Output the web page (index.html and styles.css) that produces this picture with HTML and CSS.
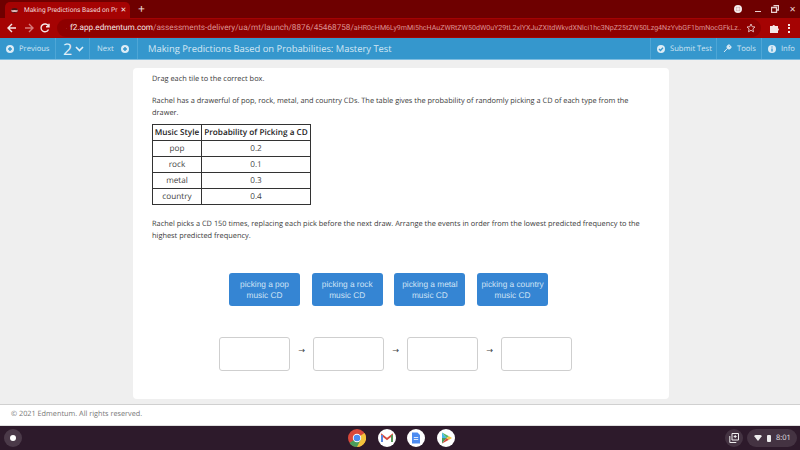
FILE: index.html
```html
<!DOCTYPE html>
<html lang="en">
  <head>
    <meta charset="UTF-8" />
    <title>Making Predictions Based on Probabilities: Mastery Test</title>
    <link rel="stylesheet" href="styles.css">
  </head>
  <body>
    <div class="tabstrip">
      <div class="tab">
        <span class="favicon"></span>
        <span class="tab-title">Making Predictions Based on Pr</span>
        <span class="tab-close">✕</span>
      </div>
      <span class="new-tab">+</span>
      <div class="window-btns">
        <span class="record"></span>
        <span class="win-min"></span>
        <svg class="win-icon" width="8" height="8" viewBox="0 0 8 8"><path d="M2.500 .5h5v4.500h-1.500M.5 2.500h5v5h-5z" fill="none" stroke="#e8d0d0" stroke-width="1.300"/></svg>
        <span class="win-close">✕</span>
      </div>
    </div>

    <div class="toolbar">
      <svg class="nav-arrow" width="10" height="10" viewBox="0 0 10 10"><path d="M9 5H1.500M5 1 1 5l4 4" fill="none" stroke="#f5e6e6" stroke-width="1.400"/></svg>
      <svg class="nav-arrow" width="10" height="10" viewBox="0 0 10 10"><path d="M1 5h7.500M5 1l4 4-4 4" fill="none" stroke="#d77a7a" stroke-width="1.400"/></svg>
      <svg class="nav-arrow" width="10" height="10" viewBox="0 0 10 10"><path d="M8.500 6.500A3.900 3.900 0 1 1 8.400 3M9 .8v3H6" fill="none" stroke="#f5e6e6" stroke-width="1.400"/></svg>
      <div class="omnibox">
        <svg width="6" height="8" viewBox="0 0 6 8"><path d="M1.500 3.500V2a1.500 1.500 0 0 1 3 0v1.500" fill="none" stroke="#f0e0e0"/><path d="M0 3.500h6V8H0z" fill="#f0e0e0"/></svg>
        <span class="url"><span class="url-host">f2.app.edmentum.com</span>/assessments-delivery/ua/mt/launch/8876/45468758/<span class="url-token">aHR0cHM6Ly9mMi5hcHAuZWRtZW50dW0uY29tL2xlYXJuZXItdWkvdXNlci1hc3NpZ25tZW50Lzg4NzYvbGF1bmNocGFkLz..</span></span>
        <svg class="star" width="10" height="10" viewBox="0 0 10 10"><path d="m5 1 1.200 2.700 2.800.3-2.100 1.900.6 2.900L5 7.300 2.500 8.800l.6-2.900L1 4l2.800-.3z" fill="none" stroke="#e8c8c8" stroke-width=".9"/></svg>
      </div>
      <svg class="puzzle" width="10" height="10" viewBox="0 0 10 10"><path d="M0 3h2.500a1.300 1.300 0 0 1 2.500 0H8v2.300a1.300 1.300 0 0 1 0 2.500V10H0z" fill="#f5e6e6"/></svg>
      <span class="dots"><i></i><i></i><i></i></span>
    </div>

    <nav class="testbar">
      <div class="bar-item prev">
        <svg width="8" height="8" viewBox="0 0 8 8"><circle cx="4" cy="4" r="4" fill="#dcebf5"/><path d="M2 4h4" stroke="#3597cd" stroke-width="1.500"/><path d="M4 2v4" stroke="#3597cd" stroke-width="1.500"/></svg>
        Previous
      </div>
      <div class="bar-item page-num">
        2
        <svg width="9" height="6" viewBox="0 0 9 6"><path d="m1 1 3.500 3.500L8 1" fill="none" stroke="#e4f0f8" stroke-width="1.600"/></svg>
      </div>
      <div class="bar-item next">
        Next
        <svg width="8" height="8" viewBox="0 0 8 8"><circle cx="4" cy="4" r="4" fill="#dcebf5"/><path d="M2 4h4" stroke="#3597cd" stroke-width="1.500"/><path d="M4 2v4" stroke="#3597cd" stroke-width="1.500"/></svg>
      </div>
      <div class="test-title">Making Predictions Based on Probabilities: Mastery Test</div>
      <div class="bar-item submit">
        <svg width="8" height="8" viewBox="0 0 8 8"><circle cx="4" cy="4" r="4" fill="#dcebf5"/><path d="m2 4 1.500 1.500L6 2.800" fill="none" stroke="#3597cd" stroke-width="1.300"/></svg>
        Submit Test
      </div>
      <div class="bar-item tools">
        <svg width="9" height="9" viewBox="0 0 9 9"><path d="M1 8 4.500 4.300a2 2 0 0 1 2.600-3L5.800 2.600l.7.700 1.300-1.200a2 2 0 0 1-3 2.500" fill="#dcebf5" stroke="#dcebf5"/></svg>
        Tools
      </div>
      <div class="bar-item info">
        <svg width="8" height="8" viewBox="0 0 8 8"><circle cx="4" cy="4" r="4" fill="#dcebf5"/><path d="M4 3.400V6.500M4 1.500v1" stroke="#3597cd" stroke-width="1.300"/></svg>
        Info
      </div>
    </nav>

    <main class="stage">
      <section class="card">
        <p class="first">Drag each tile to the correct box.</p>
        <p class="intro">Rachel has a drawerful of pop, rock, metal, and country CDs. The table gives the probability of randomly picking a CD of each type from the drawer.</p>
        <table>
          <tr><th class="col-style">Music Style</th><th class="col-prob">Probability of Picking a CD</th></tr>
          <tr><td>pop</td><td>0.2</td></tr>
          <tr><td>rock</td><td>0.1</td></tr>
          <tr><td>metal</td><td>0.3</td></tr>
          <tr><td>country</td><td>0.4</td></tr>
        </table>
        <p class="after-table">Rachel picks a CD 150 times, replacing each pick before the next draw. Arrange the events in order from the lowest predicted frequency to the highest predicted frequency.</p>
        <div class="tiles">
          <div class="tile">picking a pop music CD</div>
          <div class="tile">picking a rock music CD</div>
          <div class="tile">picking a metal music CD</div>
          <div class="tile">picking a country music CD</div>
        </div>
        <div class="drops">
          <div class="drop"></div>
          <span class="arrow">→</span>
          <div class="drop"></div>
          <span class="arrow">→</span>
          <div class="drop"></div>
          <span class="arrow">→</span>
          <div class="drop"></div>
        </div>
      </section>
    </main>

    <footer class="copyright">© 2021 Edmentum. All rights reserved.</footer>

    <div class="shelf">
      <span class="launcher"><i></i></span>
      <div class="apps">
        <svg width="18" height="18" viewBox="0 0 18 18"><circle cx="9" cy="9" r="9" fill="#d9483b"/><path d="M9 9 16.500 4A9 9 0 0 1 9 18z" fill="#f3c33c"/><path d="M9 18 13 10 9 9 1.500 14A9 9 0 0 0 9 18z" fill="#4a9d5b"/><circle cx="9" cy="9" r="4.200" fill="#fff"/><circle cx="9" cy="9" r="3.300" fill="#4c8bf0"/></svg>
        <svg width="18" height="18" viewBox="0 0 18 18"><circle cx="9" cy="9" r="9" fill="#fff"/><path d="M4 13V6l5 4 5-4v7" fill="none" stroke="#d9483b" stroke-width="1.800"/><path d="M4 6v7" stroke="#4c8bf0" stroke-width="1.800"/><path d="M14 6v7" stroke="#4a9d5b" stroke-width="1.800"/></svg>
        <svg width="18" height="18" viewBox="0 0 18 18"><circle cx="9" cy="9" r="9" fill="#fff"/><path d="M5 3.500h5.500L13 6v8.500H5z" fill="#4c8bf0"/><path d="M6.800 8.500h4.400M6.800 10.500h4.400" stroke="#dbe7fb"/></svg>
        <svg width="18" height="18" viewBox="0 0 18 18"><circle cx="9" cy="9" r="9" fill="#fff"/><path d="M5 3.500V9l4.500 0z" fill="#47b8e8"/><path d="M5 14.500V9l4.500 0z" fill="#4a9d5b"/><path d="m5 3.500 7 3.800L9.500 9z" fill="#55b96a"/><path d="m5 14.500 7-3.800L9.500 9z" fill="#d9483b"/><path d="m12 7.300 3 1.700-3 1.700L9.500 9z" fill="#f3c33c"/></svg>
      </div>
      <div class="tray">
        <span class="holding"><svg width="10" height="10" viewBox="0 0 10 10"><path d="M3 .5h6.500v6.500H3zM.8 3v6.500h6.500" fill="none" stroke="#eee" stroke-width="1"/><path d="M6.200 2v3M4.700 3.500h3" stroke="#eee"/></svg></span>
        <span class="status">
          <svg width="8" height="6" viewBox="0 0 8 6"><path d="M0 1a6 6 0 0 1 8 0L4 6z" fill="#eee"/></svg>
          <span class="battery"></span>
          <span class="clock">8:01</span>
        </span>
      </div>
    </div>
  </body>
</html>
```

FILE: styles.css
```css
* {
  box-sizing: border-box;
}
html,
body {
  margin: 0;
  height: 450px;
  overflow: hidden;
}
body {
  display: flex;
  flex-direction: column;
  width: 800px;
  font-family: "Open Sans", sans-serif;
  background-color: #efefef;
  text-rendering: geometricPrecision;
}

/* browser chrome */
.tabstrip {
  display: flex;
  align-items: flex-end;
  height: 18px;
  background-color: #6e0000;
}
.tab {
  display: flex;
  align-items: center;
  width: 125px;
  height: 16px;
  margin-left: 5px;
  padding: 0 5px 0 6px;
  background-color: #a50303;
  border-radius: 5px 5px 0 0;
  color: #f2dcdc;
  font-family: "Roboto", sans-serif;
  font-size: 6.600px;
  white-space: nowrap;
}
.favicon {
  flex: none;
  width: 7px;
  height: 5px;
  margin-right: 6px;
  background-color: #e3b7b7;
  border-top: 2px solid #4a1414;
  border-bottom: 1px solid #4a1414;
  border-radius: 50%;
}
.tab-title {
  flex: 1;
}
.tab-close {
  margin-left: 3px;
  font-size: 7px;
  color: #f5e6e6;
}
.new-tab {
  margin-left: 8px;
  align-self: center;
  color: #f5e6e6;
  font-size: 12px;
  line-height: 18px;
}
.window-btns {
  display: flex;
  align-items: center;
  gap: 10px;
  align-self: center;
  margin-left: auto;
  padding-right: 4px;
}
.record {
  width: 8px;
  height: 8px;
  margin-right: 3px;
  border: 2px solid #f3eaea;
  border-radius: 50%;
  background-color: #6e0000;
  box-shadow: inset 0 0 0 2px #f3eaea;
}
.win-min {
  width: 6px;
  height: 1px;
  margin-top: 5px;
  background-color: #e8d0d0;
}
.win-close {
  color: #e8d0d0;
  font-size: 8px;
}

.toolbar {
  display: flex;
  align-items: center;
  height: 20px;
  padding-left: 7px;
  background-color: #a50303;
}
.nav-arrow {
  flex: none;
  margin-right: 6.500px;
}
.omnibox {
  display: flex;
  align-items: center;
  width: 704px;
  height: 18px;
  padding: 0 5px 0 9px;
  background-color: #8e0000;
  border-radius: 9px;
  font-family: "Roboto", sans-serif;
  font-size: 8.200px;
  color: #dc9494;
}
.url {
  flex: 1;
  margin-left: 4px;
  white-space: nowrap;
}
.url-host {
  color: #f5e6e6;
}
.url-token {
  font-size: 7.100px;
}
.star {
  flex: none;
  margin-left: 4px;
}
.puzzle {
  flex: none;
  margin-left: 9px;
}
.dots {
  display: flex;
  flex-direction: column;
  gap: 1.500px;
  margin-left: 8px;
}
.dots i {
  width: 2px;
  height: 2px;
  background-color: #f5e6e6;
}

/* test toolbar */
.testbar {
  display: flex;
  align-items: stretch;
  height: 22px;
  background-color: #3597cd;
  border-bottom: 1px solid #7fbde0;
  color: #cfe4f2;
  font-size: 7.600px;
}
.bar-item {
  display: flex;
  align-items: center;
  gap: 5px;
  border-right: 1px solid #4ea6d6;
}
.prev {
  width: 56px;
  padding-left: 6px;
}
.page-num {
  width: 34px;
  padding-left: 7px;
  gap: 3px;
  font-size: 16px;
  color: #e4f0f8;
}
.next {
  width: 48px;
  padding-left: 7px;
  gap: 7px;
}
.test-title {
  flex: 1;
  padding: 2px 0 0 10px;
  font-size: 9.400px;
  line-height: 18px;
  color: #d6e8f4;
}
.submit {
  width: 67px;
  padding-left: 6px;
  border-left: 1px solid #4ea6d6;
}
.tools {
  width: 45px;
  padding-left: 6px;
}
.info {
  width: 38px;
  padding-left: 6px;
  border-right: none;
}

/* question area */
.stage {
  flex: 1;
  padding-top: 8px;
  border-bottom: 1px solid #d0d0d0;
}
.card {
  width: 536px;
  height: 331px;
  margin-left: 133px;
  padding: 5px 19px 0;
  background-color: #fff;
  border-radius: 4px;
  color: #3b3b3b;
  font-size: 7.400px;
  line-height: 12px;
}
p {
  margin: 0 0 10px;
}
.intro {
  margin-bottom: 5px;
}
table {
  border-collapse: collapse;
  table-layout: fixed;
  width: 159px;
  margin-bottom: 13px;
  color: #444;
}
th,
td {
  height: 16px;
  padding: 0;
  border: 1px solid #333;
  text-align: center;
  font-size: 8.200px;
  line-height: 12px;
}
th {
  font-weight: 600;
  color: #222;
}
.col-style {
  width: 49px;
}
.after-table {
  margin-bottom: 0;
}
.tiles {
  display: flex;
  gap: 11.700px;
  margin: 31px 0 0 77px;
}
.tile {
  display: flex;
  align-items: center;
  flex: none;
  width: 71px;
  height: 33px;
  padding: 0 2px;
  background-color: #3585d3;
  border-radius: 3px;
  color: #cfe3f5;
  font-family: "Liberation Sans", sans-serif;
  font-size: 8.300px;
  line-height: 10.500px;
  text-align: center;
}
.drops {
  display: flex;
  align-items: center;
  margin: 31px 0 0 67px;
}
.drop {
  width: 71px;
  height: 34px;
  border: 1px solid #cfcfcf;
  border-radius: 3px;
  background-color: #fff;
}
.arrow {
  width: 23px;
  padding-bottom: 6px;
  text-align: center;
  font-family: "DejaVu Sans", sans-serif;
  font-size: 8px;
  color: #444;
}

.copyright {
  flex: none;
  height: 20px;
  padding-left: 11px;
  background-color: #fff;
  font-size: 7.300px;
  line-height: 18px;
  color: #777;
}

/* chromeos shelf */
.shelf {
  display: flex;
  align-items: center;
  flex: none;
  height: 25px;
  background-color: #2d1a2b;
  border-top: 1px solid #e0e0e0;
}
.launcher {
  display: flex;
  align-items: center;
  justify-content: center;
  width: 18px;
  height: 18px;
  margin-left: 4px;
  background-color: #4b3a49;
  border-radius: 50%;
}
.launcher i {
  width: 6px;
  height: 6px;
  background-color: #fff;
  border-radius: 50%;
}
.apps {
  display: flex;
  gap: 11.500px;
  margin-left: 326px;
}
.tray {
  display: flex;
  align-items: center;
  gap: 4px;
  margin-left: auto;
  padding-right: 3px;
}
.holding {
  display: flex;
  align-items: center;
  justify-content: center;
  width: 18px;
  height: 18px;
  background-color: #443342;
  border-radius: 50%;
}
.status {
  display: flex;
  align-items: center;
  gap: 5px;
  width: 50px;
  height: 18px;
  padding-left: 7px;
  background-color: #443342;
  border-radius: 9px;
  color: #e8e2e7;
  font-size: 7.500px;
}
.battery {
  width: 4px;
  height: 7px;
  background-color: #eee;
  border-radius: 1px;
}
```
